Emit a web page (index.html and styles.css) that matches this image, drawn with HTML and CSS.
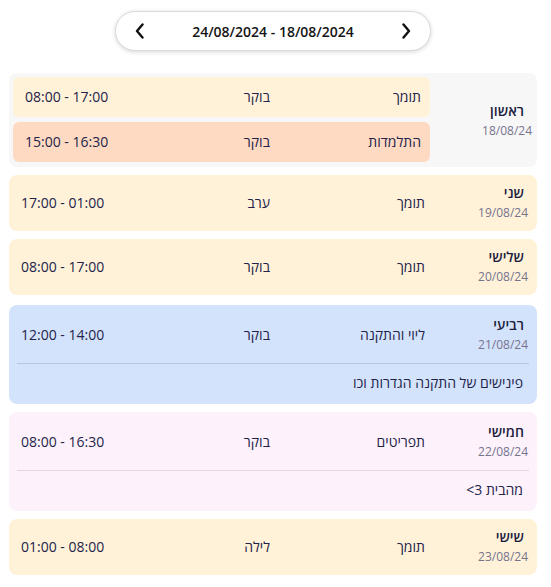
FILE: index.html
```html
<!DOCTYPE html>
<html lang="he" dir="rtl">
<head>
<meta charset="utf-8">
<title>משמרות</title>
<link rel="stylesheet" href="styles.css">
</head>
<body>
<div class="page">
  <div class="header">
    <div class="pill">
      <button class="nav" aria-label="הקודם">
        <svg width="10" height="16" viewBox="0 0 10 16"><polyline points="7.5,1.5 2,8 7.5,14.5" fill="none" stroke="#111" stroke-width="2.4" stroke-linecap="round" stroke-linejoin="round"/></svg>
      </button>
      <span class="range">24/08/2024 - 18/08/2024</span>
      <button class="nav" aria-label="הבא">
        <svg width="10" height="16" viewBox="0 0 10 16"><polyline points="2.5,1.5 8,8 2.5,14.5" fill="none" stroke="#111" stroke-width="2.4" stroke-linecap="round" stroke-linejoin="round"/></svg>
      </button>
    </div>
  </div>

  <div class="list">
    <div class="card card-multi">
      <div class="card-main">
        <div class="day">
          <div class="day-name">ראשון</div>
          <div class="day-date">18/08/24</div>
        </div>
        <div class="shifts">
          <div class="shift shift-cream">
            <span class="role">תומך</span>
            <span class="type">בוקר</span>
            <span class="time">08:00 - 17:00</span>
          </div>
          <div class="shift shift-peach">
            <span class="role">התלמדות</span>
            <span class="type">בוקר</span>
            <span class="time">15:00 - 16:30</span>
          </div>
        </div>
      </div>
    </div>

    <div class="card cream">
      <div class="card-main">
        <div class="day">
          <div class="day-name">שני</div>
          <div class="day-date">19/08/24</div>
        </div>
        <div class="shifts">
          <div class="shift">
            <span class="role">תומך</span>
            <span class="type">ערב</span>
            <span class="time">17:00 - 01:00</span>
          </div>
        </div>
      </div>
    </div>

    <div class="card cream">
      <div class="card-main">
        <div class="day">
          <div class="day-name">שלישי</div>
          <div class="day-date">20/08/24</div>
        </div>
        <div class="shifts">
          <div class="shift">
            <span class="role">תומך</span>
            <span class="type">בוקר</span>
            <span class="time">08:00 - 17:00</span>
          </div>
        </div>
      </div>
    </div>

    <div class="card blue with-note">
      <div class="card-main">
        <div class="day">
          <div class="day-name">רביעי</div>
          <div class="day-date">21/08/24</div>
        </div>
        <div class="shifts">
          <div class="shift">
            <span class="role">ליוי והתקנה</span>
            <span class="type">בוקר</span>
            <span class="time">12:00 - 14:00</span>
          </div>
        </div>
      </div>
      <div class="note">פינישים של התקנה הגדרות וכו</div>
    </div>

    <div class="card pink with-note">
      <div class="card-main">
        <div class="day">
          <div class="day-name">חמישי</div>
          <div class="day-date">22/08/24</div>
        </div>
        <div class="shifts">
          <div class="shift">
            <span class="role">תפריטים</span>
            <span class="type">בוקר</span>
            <span class="time">08:00 - 16:30</span>
          </div>
        </div>
      </div>
      <div class="note">מהבית 3&gt;</div>
    </div>

    <div class="card cream">
      <div class="card-main">
        <div class="day">
          <div class="day-name">שישי</div>
          <div class="day-date">23/08/24</div>
        </div>
        <div class="shifts">
          <div class="shift">
            <span class="role">תומך</span>
            <span class="type">לילה</span>
            <span class="time">01:00 - 08:00</span>
          </div>
        </div>
      </div>
    </div>
  </div>
</div>
</body>
</html>
```
FILE: styles.css
```css
* { box-sizing: border-box; }

html, body {
  margin: 0;
  background: #ffffff;
}

body {
  font-family: "Open Sans", "DejaVu Sans", sans-serif;
  color: #23234a;
  font-size: 14px;
}

.page {
  padding: 11px 14px 0 9px;
}

.header {
  display: flex;
  justify-content: center;
  margin-bottom: 22px;
}

.pill {
  direction: ltr;
  width: 316px;
  height: 40px;
  border: 1px solid #dadada;
  border-radius: 20px;
  background: #fff;
  box-shadow: 0 1px 4px rgba(0, 0, 0, 0.16);
  display: flex;
  align-items: center;
  justify-content: space-between;
  padding: 0 18px;
}

.nav {
  border: 0;
  background: none;
  padding: 0;
  width: 12px;
  height: 18px;
  display: flex;
  align-items: center;
  justify-content: center;
}

.range {
  font-size: 14px;
  font-weight: 600;
  color: #151515;
}

.list {
  display: flex;
  flex-direction: column;
  gap: 8px;
}

.card {
  border-radius: 8px;
  padding: 8px;
  display: flex;
  flex-direction: column;
}

.card-main {
  display: flex;
  align-items: center;
}

.day {
  width: 99px;
  flex: none;
  text-align: right;
}

.day-name {
  font-size: 14px;
  font-weight: 600;
  line-height: 20px;
  padding-right: 5px;
  color: #1d1d40;
}

.day-date {
  font-size: 12px;
  line-height: 20px;
  padding-right: 1px;
  color: #77738e;
}

.shifts {
  flex: 1;
  display: flex;
  flex-direction: column;
  gap: 5px;
}

.shift {
  display: flex;
  align-items: center;
  height: 40px;
  padding: 0 5px 0 4px;
  line-height: 20px;
}

.role {
  width: 155px;
  flex: none;
}

.time {
  margin-right: auto;
  direction: ltr;
}

/* multi-shift day */
.card-multi {
  background: #f7f7f7;
  padding: 4px 4px 5px;
}

.card-multi .day {
  width: 103px;
  padding-top: 2px;
}

.card-multi .day-name {
  padding-right: 9px;
}

.card-multi .shift {
  border-radius: 6px;
  padding: 0 9px 0 12px;
}

.card-multi .role {
  width: 151px;
}

.shift-cream { background: #fff2d9; }
.shift-peach { background: #ffdac2; }

.cream { background: #fff2d9; }
.blue { background: #d4e3fc; margin-top: 2px; }
.pink { background: #fdf2fb; }

.with-note {
  padding: 10px 8px;
}

.note {
  margin-top: 8px;
  padding: 8px 6px 0 6px;
  line-height: 22px;
  border-top: 1px solid #b7c6de;
}

.pink .note {
  border-top-color: #e4d5e0;
}
```
